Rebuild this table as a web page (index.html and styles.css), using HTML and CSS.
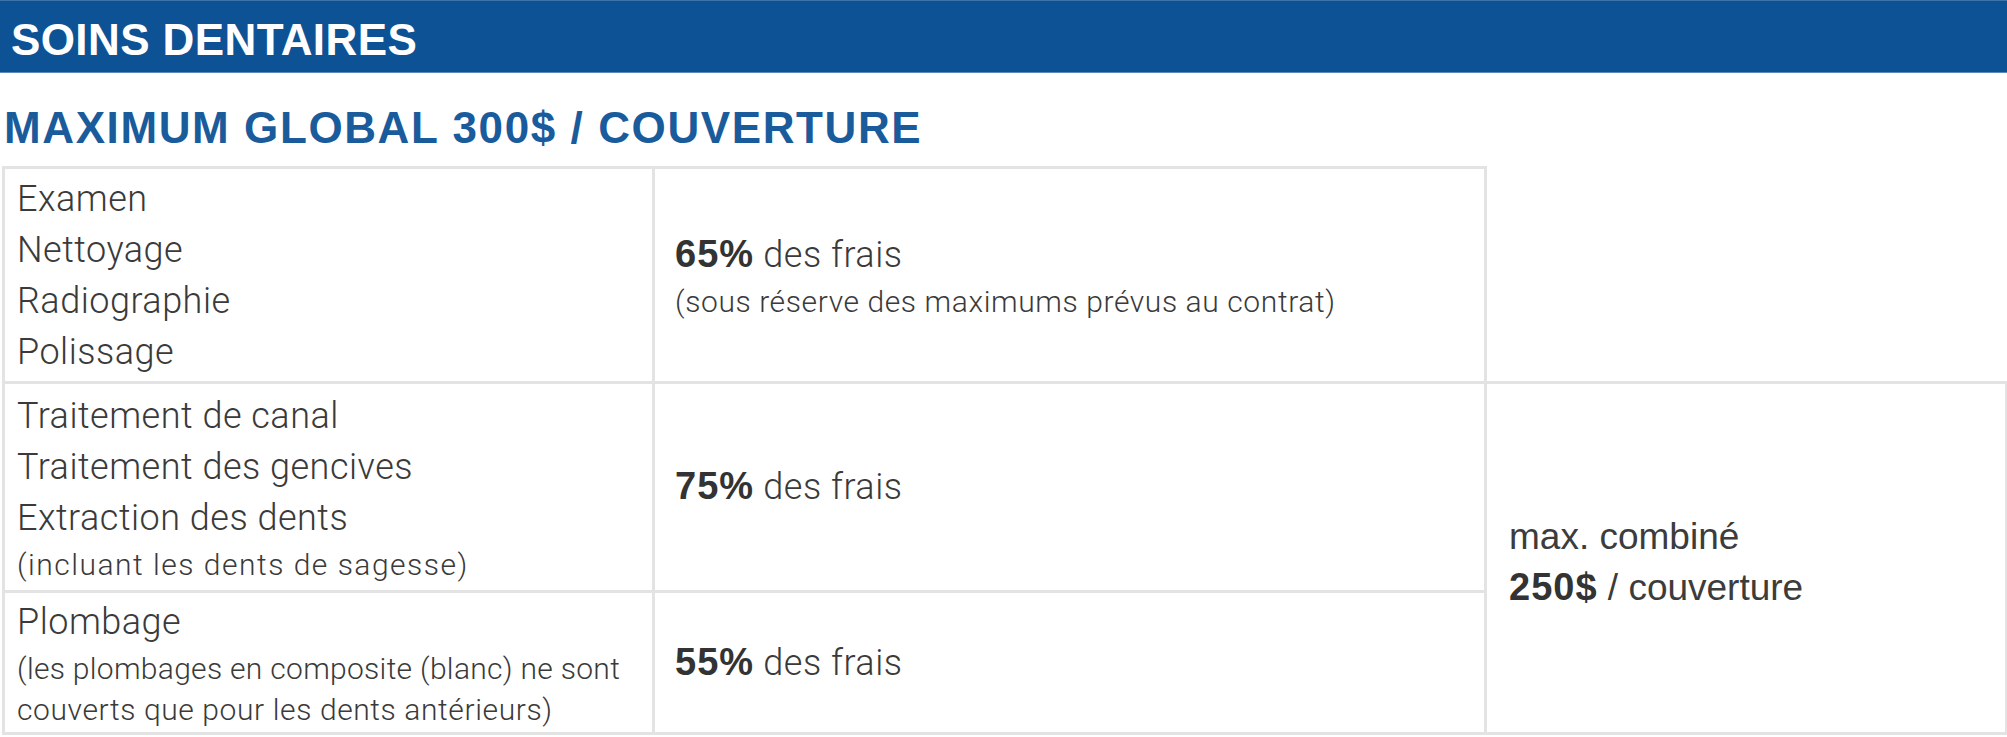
FILE: index.html
```html
<!DOCTYPE html>
<html lang="fr">
<head>
<meta charset="utf-8">
<title>Soins dentaires</title>
<link rel="stylesheet" href="styles.css">
</head>
<body>
<div class="bar"><h1 class="bar-title">SOINS DENTAIRES</h1></div>
<h2 class="heading">MAXIMUM GLOBAL 300$ / COUVERTURE</h2>
<table class="grid">
  <colgroup>
    <col class="c1">
    <col class="c2">
    <col class="c3">
  </colgroup>
  <tr class="r1">
    <td class="item">
      <div class="line">Examen</div>
      <div class="line">Nettoyage</div>
      <div class="line">Radiographie</div>
      <div class="line">Polissage</div>
    </td>
    <td class="rate">
      <div class="line"><b>65%</b> des frais</div>
      <div class="small">(sous réserve des maximums prévus au contrat)</div>
    </td>
    <td class="blank"></td>
  </tr>
  <tr class="r2">
    <td class="item">
      <div class="line">Traitement de canal</div>
      <div class="line">Traitement des gencives</div>
      <div class="line">Extraction des dents</div>
      <div class="small wide">(incluant les dents de sagesse)</div>
    </td>
    <td class="rate">
      <div class="line"><b>75%</b> des frais</div>
    </td>
    <td class="max" rowspan="2">
      <div class="mline">max. combiné</div>
      <div class="mline"><b>250$</b> / couverture</div>
    </td>
  </tr>
  <tr class="r3">
    <td class="item">
      <div class="line">Plombage</div>
      <div class="small tight">(les plombages en composite (blanc) ne sont</div>
      <div class="small">couverts que pour les dents antérieurs)</div>
    </td>
    <td class="rate">
      <div class="line"><b>55%</b> des frais</div>
    </td>
  </tr>
</table>
</body>
</html>
```

FILE: styles.css
```css
html, body {
  margin: 0;
  padding: 0;
  background: #ffffff;
}

body {
  width: 2007px;
  font-family: Roboto, "Liberation Sans", sans-serif;
  color: #3a3a3a;
}

.bar {
  background: #0e5296;
  border-top: 1px solid #3f74ab;
  border-bottom: 1px solid #5b89bb;
  box-sizing: border-box;
  height: 73px;
  padding: 14px 0 0 11px;
}

.bar-title {
  margin: 0;
  font-family: "Liberation Sans", Arial, sans-serif;
  font-weight: 700;
  font-size: 44px;
  line-height: 49px;
  letter-spacing: 0.4px;
  color: #ffffff;
}

.heading {
  margin: 30px 0 14px 4px;
  font-family: "Liberation Sans", Arial, sans-serif;
  font-weight: 700;
  font-size: 44px;
  line-height: 49px;
  letter-spacing: 1.6px;
  color: #1a5b9c;
}

.grid {
  margin-left: 2px;
  border-collapse: collapse;
  table-layout: fixed;
  width: 2003px;
}

.c1 { width: 650px; }
.c2 { width: 832px; }
.c3 { width: 521px; }

.grid td {
  border: 3px solid #e3e3e3;
  vertical-align: middle;
  padding: 0;
}

.grid td.blank {
  border: none;
}

.r1 { height: 215px; }
.r2 { height: 209px; }
.r3 { height: 142px; }

.item { padding: 2px 0 0 12px !important; }
.rate { padding-left: 20px !important; }
.max { padding: 8px 0 0 22px !important; }

.line {
  font-size: 36px;
  font-weight: 300;
  line-height: 51px;
  letter-spacing: 0.5px;
  white-space: nowrap;
}

.small {
  font-size: 30px;
  font-weight: 300;
  line-height: 41px;
  letter-spacing: 0.6px;
  white-space: nowrap;
}

.small.wide { letter-spacing: 1.5px; }
.small.tight { letter-spacing: 0.3px; }

.mline {
  font-family: "Liberation Sans", Arial, sans-serif;
  font-size: 37px;
  font-weight: 400;
  line-height: 51px;
  white-space: nowrap;
  color: #3c3c3c;
}

.line b,
.mline b {
  font-family: "Liberation Sans", Arial, sans-serif;
  font-weight: 700;
  font-size: 38px;
  letter-spacing: 1px;
  color: #333333;
}
```
